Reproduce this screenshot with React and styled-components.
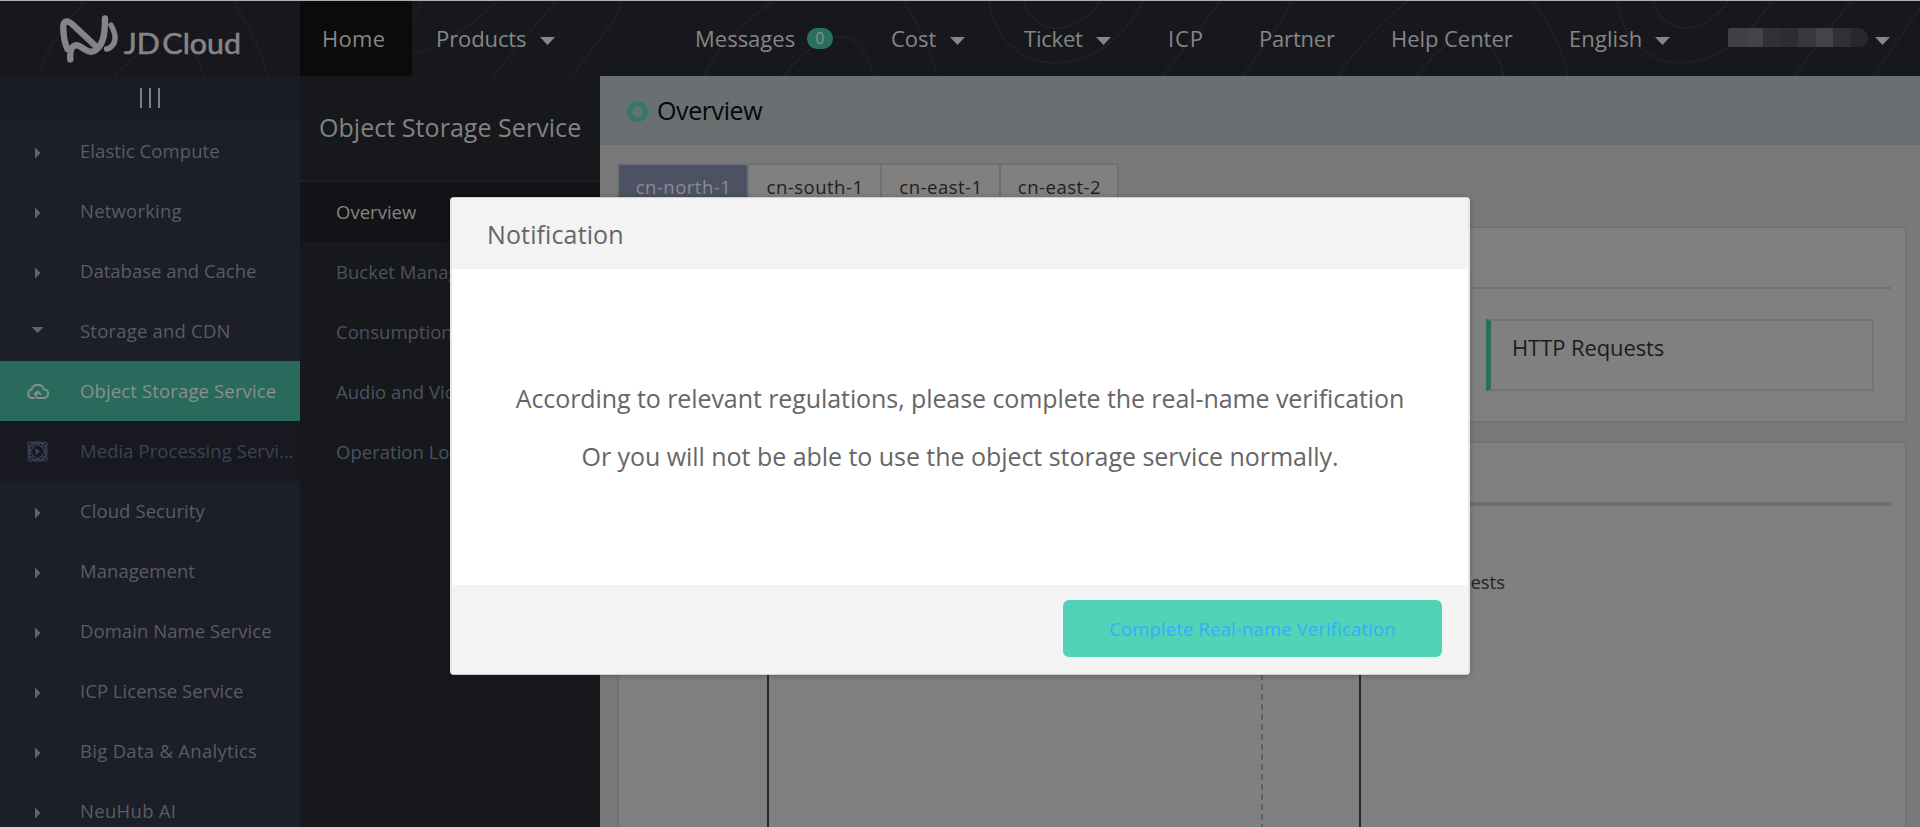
import React from 'react';
import styled, { createGlobalStyle, css } from 'styled-components';

const GlobalStyle = createGlobalStyle`
  *, *::before, *::after { box-sizing: border-box; }
  body {
    margin: 0;
    font-family: "Open Sans", "Noto Sans", sans-serif;
    background: #797979;
    overflow: hidden;
  }
`;

const Page = styled.div`
  position: relative;
  display: flex;
  flex-direction: column;
  width: 1920px;
  height: 827px;
  overflow: hidden;
`;

/* ---------- header ---------- */

const Header = styled.header`
  position: relative;
  display: flex;
  flex: none;
  height: 76px;
  border-top: 1px solid #b0b0b0;
  background: #17181d;
  color: #868686;
`;

const HeaderCurves = styled.svg`
  position: absolute;
  left: 0;
  top: 0;
  fill: none;
  stroke: #1e2025;
  stroke-width: 1.8;
`;

const Brand = styled.div`
  position: relative;
  width: 300px;
  padding: 13px 0 0 58px;

  svg { display: block; }
`;

const NavItem = styled.div`
  position: relative;
  display: flex;
  align-items: center;
  margin-left: ${(p) => p.$gap || 0}px;
  font-size: 22px;
  white-space: nowrap;
  letter-spacing: ${(p) => p.$spacing || 0}px;
  ${(p) =>
    p.$active &&
    css`
      width: 112px;
      padding: 0 0 1px 22px;
      background: #0b0b0c;
    `}
`;

const NavLabel = styled.span`
  width: ${(p) => p.$width}px;
  padding: 0 0 1px 1px;
`;

const Caret = styled.i`
  width: 15px;
  height: 8px;
  margin-top: 5px;
  background: #868686;
  clip-path: polygon(0 0, 100% 0, 50% 100%);
`;

const Badge = styled.span`
  width: 26px;
  height: 21px;
  border-radius: 10px;
  background: #2a6f5f;
  color: #8b8f8d;
  font-size: 15.5px;
  line-height: 21px;
  text-align: center;
`;

const MaskedName = styled.div`
  display: flex;
  width: 140px;
  height: 19px;
  margin: 0 7px 3px 0;
  border-radius: 3px 14px 12px 3px;
  overflow: hidden;
`;

const MaskCell = styled.span`
  flex: ${(p) => p.$grow || 1};
  background: ${(p) => p.$tone};
`;

/* ---------- columns ---------- */

const Columns = styled.div`
  display: flex;
  flex: 1;
  min-height: 0;
`;

const Sidebar = styled.nav`
  flex: none;
  width: 300px;
  overflow: hidden;
  background: #1c1e28;
`;

const Toggle = styled.div`
  display: flex;
  justify-content: center;
  align-items: center;
  gap: 7px;
  height: 45px;
  padding-bottom: 1px;
  background: #191b25;
`;

const ToggleBar = styled.span`
  width: 2px;
  height: 20px;
  background: #7f8084;
`;

const sideTones = {
  group: { bg: 'transparent', fg: '#5a5c64' },
  active: { bg: '#286a5b', fg: '#8e8e8a' },
  child: { bg: '#181920', fg: '#3d4156' },
};

const SideItem = styled.div`
  display: flex;
  align-items: center;
  height: 60px;
  background: ${(p) => sideTones[p.$kind].bg};
  color: ${(p) => sideTones[p.$kind].fg};
  font-size: 18.5px;
  letter-spacing: ${(p) => p.$spacing}px;
  white-space: nowrap;
`;

const SideIcon = styled.span`
  display: flex;
  justify-content: center;
  width: 75px;
  margin-right: 5px;
`;

const SideLabel = styled.span`
  padding-bottom: 2px;
`;

const SideArrow = styled.i`
  width: ${(p) => (p.$open ? 12 : 6)}px;
  height: ${(p) => (p.$open ? 6 : 12)}px;
  margin-top: ${(p) => (p.$open ? -2 : 4)}px;
  background: #63656c;
  clip-path: ${(p) =>
    p.$open ? 'polygon(0 0, 100% 0, 50% 100%)' : 'polygon(0 0, 100% 50%, 0 100%)'};
`;

const SubPanel = styled.nav`
  flex: none;
  width: 300px;
  background: #17181c;
`;

const SubTitle = styled.h2`
  height: 106px;
  margin: 0;
  padding-left: 19px;
  border-bottom: 2px solid #1d1e23;
  color: #838383;
  font-size: 25px;
  font-weight: 400;
  line-height: 103px;
  letter-spacing: 0.05px;
  white-space: nowrap;
`;

const SubItem = styled.div`
  height: 60px;
  padding-left: 36px;
  background: ${(p) => (p.$active ? '#121317' : 'transparent')};
  color: ${(p) => (p.$active ? '#858585' : '#4b5160')};
  font-size: 18.5px;
  line-height: 60px;
  letter-spacing: 0.02px;
  white-space: nowrap;
`;

/* ---------- main area ---------- */

const Main = styled.main`
  flex: 1;
  min-width: 0;
  overflow: hidden;
  background: #797979;
`;

const PageHead = styled.div`
  display: flex;
  align-items: center;
  height: 69px;
  padding: 0 0 1px 27px;
  background: #6a6f72;
  color: #070707;
  font-size: 25px;
  letter-spacing: -0.4px;
`;

const Ring = styled.span`
  width: 21px;
  height: 21px;
  margin: 3px 9px 0 0;
  border: 5px solid #317a66;
  border-radius: 50%;
`;

const Content = styled.div`
  padding: 18px 13px 0 17px;
`;

const Tabs = styled.div`
  display: flex;
  width: max-content;
  height: 49px;
  margin-bottom: 14px;
  border: 2px solid #6b7176;
`;

const Tab = styled.div`
  width: ${(p) => p.$width}px;
  padding-left: 1px;
  background: ${(p) => (p.$active ? '#4c5263' : '#808080')};
  color: ${(p) => (p.$active ? '#8b8c90' : '#1f2021')};
  border-left: ${(p) => (p.$first ? 0 : '2px solid #6b7176')};
  font-size: 18.5px;
  line-height: 43px;
  letter-spacing: 0.5px;
  text-align: center;
`;

const Card = styled.section`
  height: ${(p) => p.$height}px;
  margin-bottom: 18px;
  padding: 0 14px;
  border: 2px solid #717273;
  border-radius: 4px;
  background: #808080;
`;

const CardHead = styled.div`
  height: ${(p) => p.$height}px;
  border-bottom: ${(p) => p.$rule}px solid #6e7074;
`;

const Stats = styled.div`
  display: flex;
  justify-content: flex-end;
  padding: 30px 17px 0 0;
`;

const Stat = styled.div`
  width: 388px;
  height: 72px;
  padding: 11px 0 0 21px;
  border: 2px solid #737475;
  border-left: 5px solid #2a6e5f;
  color: #1c1c1c;
  font-size: 22px;
  line-height: 30px;
  letter-spacing: -0.1px;
`;

const ChartTitles = styled.div`
  display: flex;
  justify-content: flex-end;
  height: 118px;
  padding: 62px 386px 0 0;
  color: #232323;
  font-size: 18.5px;
  line-height: 27px;
`;

const Charts = styled.div`
  display: flex;
  gap: 96px;
  height: 260px;
  padding-left: 134px;
`;

const Plot = styled.div`
  width: ${(p) => p.$width}px;
  border-left: 2px solid #272828;
  ${(p) =>
    p.$dashed &&
    css`
      background: repeating-linear-gradient(#5f6265 0 6px, transparent 6px 10px) right top / 2px 100% no-repeat;
    `}
`;

/* ---------- dialog ---------- */

const Dialog = styled.div`
  position: absolute;
  left: 450px;
  top: 197px;
  display: flex;
  flex-direction: column;
  width: 1020px;
  height: 478px;
  border: 1px solid #d2d2d2;
  border-width: 1px 2px;
  border-color: #cfcfcf #e6e6e6;
  border-radius: 4px;
  background: #fff;
  box-shadow: 0 1px 6px rgba(0, 0, 0, 0.25);
  overflow: hidden;
`;

const DialogHead = styled.div`
  height: 71px;
  padding-left: 35px;
  background: #f3f3f3;
  color: #666;
  font-size: 25px;
  line-height: 72px;
  letter-spacing: 0.12px;
`;

const DialogBody = styled.div`
  display: flex;
  flex: 1;
  flex-direction: column;
  align-items: center;
  padding-top: 100px;
  color: #666;
  font-size: 25px;
  line-height: 58px;
  white-space: nowrap;
`;

const DialogLine = styled.div`
  letter-spacing: ${(p) => p.$spacing}px;
`;

const DialogFoot = styled.div`
  display: flex;
  justify-content: flex-end;
  height: 89px;
  padding: 15px 26px 0 0;
  background: #f3f3f3;
`;

const ConfirmButton = styled.button`
  width: 379px;
  height: 57px;
  padding: 0 0 1px;
  border: 0;
  border-radius: 6px;
  background: #52d3b8;
  color: #2fb0f8;
  font-family: inherit;
  font-size: 18.5px;
  letter-spacing: 0.14px;
`;

/* ---------- drawings ---------- */

const Logo = () => (
  <svg width="184" height="52" viewBox="58 14 184 52">
    <g fill="none" stroke="#858585" strokeLinecap="round" strokeWidth="6.400">
      <path d="M94.500 45 L72 24 C66.500 19 62.800 21.500 63.300 29 C63.600 37 65 44 67.500 49" />
      <path d="M70.300 59.500 C69.500 47 74 42.500 81 47 C87 51 91 54 96.500 49.500 C103 44 105 35 105 18.500" />
      <path d="M111 25 C116 34 117 41 111.500 46.500 Q109.500 48.500 106.500 49" strokeWidth="5.400" />
    </g>
    <path d="M74.500 27.500L92.500 44.500" stroke="#767676" strokeWidth="0.800" />
    <text
      x="124"
      y="53.500"
      fill="#858585"
      stroke="#858585"
      strokeWidth="0.6"
      fontFamily="Lato, sans-serif"
      fontSize="28.500"
      textLength="117"
      lengthAdjust="spacingAndGlyphs"
      wordSpacing="-5"
    >
      JD Cloud
    </text>
  </svg>
);

const CURVES = [
  'M39 76C45 50 62 25 85 0',
  'M114 76C160 25 190 25 204 76',
  'M233 0Q258 38 268 76',
  'M412 53C440 46 465 30 498 0',
  'M412 17L422 0',
  'M492 76L556 0',
  'M571 76L612 22Q620 10 621 0',
  'M705 76Q710 50 772 0',
  'M783 76C825 22 862 22 873 76',
  'M903 0Q928 36 937 76',
  'M989 0C1000 80 1100 85 1143 0',
  'M1023 0C1035 36 1075 36 1101 0',
  'M1162 76L1221 0',
  'M1242 76L1280 22L1291 0',
  'M1340 76Q1345 55 1407 0',
  'M1416 76C1455 22 1492 22 1504 76',
  'M1533 0Q1561 38 1568 76',
  'M1617 0C1630 80 1720 85 1771 0',
  'M1652 0C1664 36 1704 36 1728 0',
  'M1793 76L1851 0',
  'M1873 76L1920 7',
];

const CloudUpIcon = () => (
  <svg width="22" height="17" viewBox="0 0 22 17" fill="none" stroke="#85908b" strokeWidth="1.900">
    <path d="M8 15H5.300A4.300 4.300 0 0 1 4.600 6.500A6.300 6.300 0 0 1 16.700 6.200A4.400 4.400 0 0 1 16.800 15H11.300C8.800 15 8.500 13 10.500 9.500" />
    <path d="M7 11.500L10.800 8.600L14 11.800" />
  </svg>
);

const MediaIcon = () => (
  <svg width="21" height="21" viewBox="0 0 21 21" fill="none" stroke="#3f4358" strokeWidth="1.200">
    <path d="M6 1.200H15M6 19.800H15M1.200 6V15M19.800 6V15" />
    <rect x="1" y="1" width="4.500" height="4.500" rx="1.500" />
    <rect x="15.500" y="1" width="4.500" height="4.500" rx="1.500" />
    <rect x="1" y="15.500" width="4.500" height="4.500" rx="1.500" />
    <rect x="15.500" y="15.500" width="4.500" height="4.500" rx="1.500" />
    <ellipse cx="10.500" cy="10.500" rx="10" ry="6.200" transform="rotate(45 10.500 10.500)" />
    <ellipse cx="10.500" cy="10.500" rx="10" ry="6.200" transform="rotate(-45 10.500 10.500)" />
    <path d="M8.500 7L13 10.500L8.500 14Z" fill="#3f4358" stroke="none" />
  </svg>
);

/* ---------- data ---------- */

const NAV = [
  { label: 'Products', gap: 23, width: 105, caret: true, spacing: -0.1 },
  { label: 'Messages', gap: 139, width: 113, badge: '0' },
  { label: 'Cost', gap: 57, width: 60, caret: true },
  { label: 'Ticket', gap: 58, width: 73, caret: true, spacing: -0.2 },
  { label: 'ICP', gap: 56, width: 37, spacing: 0.9 },
  { label: 'Partner', gap: 54, width: 78, spacing: -0.19 },
  { label: 'Help Center', gap: 54, width: 124, spacing: -0.05 },
  { label: 'English', gap: 54, width: 87, caret: true, spacing: 0.1 },
];

const MASK = ['#404145', '#434448', '#303136', '#2c2d31', '#37383d', '#434448', '#303136', '#27282d'];

const SERVICES = [
  { label: 'Elastic Compute', kind: 'group', spacing: 0.08 },
  { label: 'Networking', kind: 'group', spacing: 0.2 },
  { label: 'Database and Cache', kind: 'group', spacing: 0 },
  { label: 'Storage and CDN', kind: 'group', open: true, spacing: 0.2 },
  { label: 'Object Storage Service', kind: 'active', icon: <CloudUpIcon />, spacing: 0.14 },
  { label: 'Media Processing Servi...', kind: 'child', icon: <MediaIcon />, spacing: 0.06 },
  { label: 'Cloud Security', kind: 'group', spacing: 0.08 },
  { label: 'Management', kind: 'group', spacing: 0.05 },
  { label: 'Domain Name Service', kind: 'group', spacing: 0.06 },
  { label: 'ICP License Service', kind: 'group', spacing: 0.03 },
  { label: 'Big Data & Analytics', kind: 'group', spacing: 0.29 },
  { label: 'NeuHub AI', kind: 'group', spacing: 0.3 },
];

const SUB_ITEMS = ['Overview', 'Bucket Management', 'Consumption', 'Audio and Video', 'Operation Logs'];

const REGIONS = [
  { name: 'cn-north-1', width: 128 },
  { name: 'cn-south-1', width: 133 },
  { name: 'cn-east-1', width: 119 },
  { name: 'cn-east-2', width: 118 },
];

export default function App() {
  return (
    <>
      <GlobalStyle />
      <Page>
        <Header>
          <HeaderCurves width="1920" height="75" viewBox="0 0 1920 75">
            {CURVES.map((d) => (
              <path key={d} d={d} />
            ))}
          </HeaderCurves>
          <Brand>
            <Logo />
          </Brand>
          <NavItem $active $spacing={0.3}>Home</NavItem>
          {NAV.map((n) => (
            <NavItem key={n.label} $gap={n.gap} $spacing={n.spacing}>
              <NavLabel $width={n.width}>{n.label}</NavLabel>
              {n.badge && <Badge>{n.badge}</Badge>}
              {n.caret && <Caret />}
            </NavItem>
          ))}
          <NavItem $gap={58}>
            <MaskedName>
              {MASK.map((tone, i) => (
                <MaskCell key={i} $tone={tone} />
              ))}
            </MaskedName>
            <Caret />
          </NavItem>
        </Header>

        <Columns>
          <Sidebar>
            <Toggle>
              <ToggleBar />
              <ToggleBar />
              <ToggleBar />
            </Toggle>
            {SERVICES.map((s) => (
              <SideItem key={s.label} $kind={s.kind} $spacing={s.spacing}>
                <SideIcon>{s.icon || <SideArrow $open={s.open} />}</SideIcon>
                <SideLabel>{s.label}</SideLabel>
              </SideItem>
            ))}
          </Sidebar>

          <SubPanel>
            <SubTitle>Object Storage Service</SubTitle>
            {SUB_ITEMS.map((label, i) => (
              <SubItem key={label} $active={i === 0}>
                {label}
              </SubItem>
            ))}
          </SubPanel>

          <Main>
            <PageHead>
              <Ring />
              Overview
            </PageHead>
            <Content>
              <Tabs>
                {REGIONS.map((r, i) => (
                  <Tab key={r.name} $width={r.width} $active={i === 0} $first={i === 0}>
                    {r.name}
                  </Tab>
                ))}
              </Tabs>
              <Card $height={197}>
                <CardHead $height={61} $rule={2} />
                <Stats>
                  <Stat>HTTP Requests</Stat>
                </Stats>
              </Card>
              <Card $height={450}>
                <CardHead $height={63} $rule={4} />
                <ChartTitles>Requests</ChartTitles>
                <Charts>
                  <Plot $width={496} $dashed />
                  <Plot $width={500} />
                </Charts>
              </Card>
            </Content>
          </Main>
        </Columns>

        <Dialog>
          <DialogHead>Notification</DialogHead>
          <DialogBody>
            <DialogLine $spacing={-0.08}>
              According to relevant regulations, please complete the real-name verification
            </DialogLine>
            <DialogLine $spacing={-0.045}>
              Or you will not be able to use the object storage service normally.
            </DialogLine>
          </DialogBody>
          <DialogFoot>
            <ConfirmButton>Complete Real-name Verification</ConfirmButton>
          </DialogFoot>
        </Dialog>
      </Page>
    </>
  );
}
